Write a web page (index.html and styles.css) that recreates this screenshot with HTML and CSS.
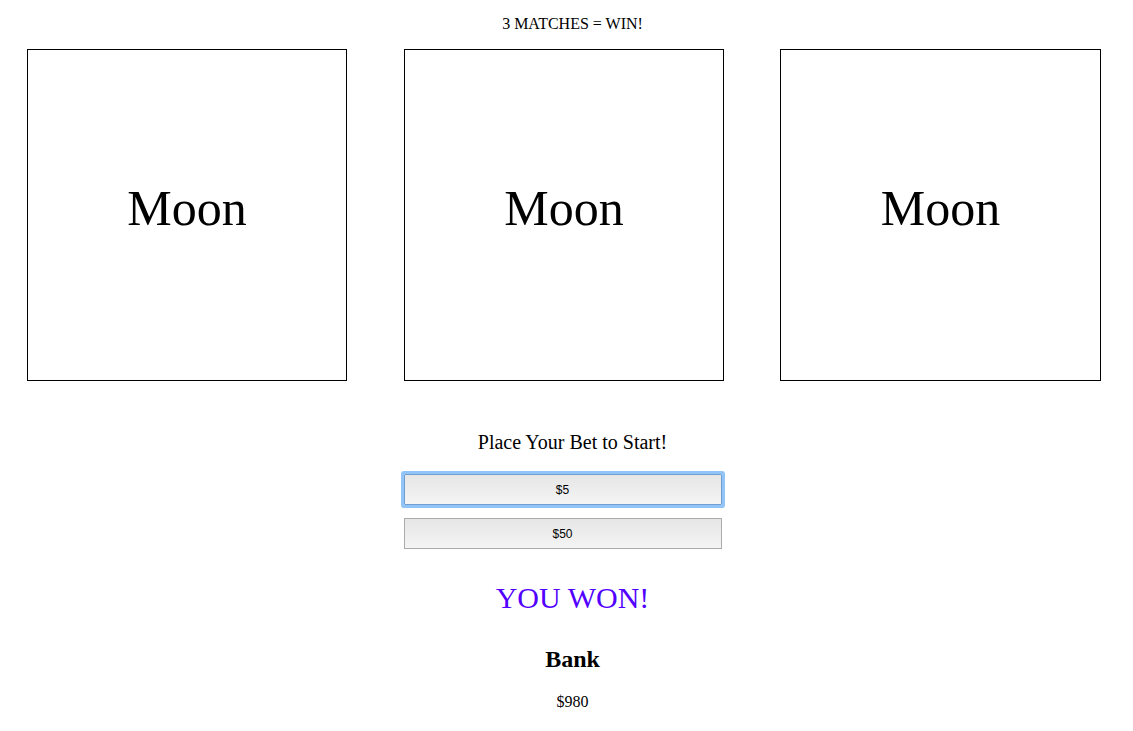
FILE: index.html
```html
<!DOCTYPE html>
<html>
<head>
<meta charset="utf-8">
<link rel="stylesheet" href="styles.css">
</head>
<body>
<p class="rule">3 MATCHES = WIN!</p>
<div class="reels">
  <div class="reel">Moon</div>
  <div class="reel">Moon</div>
  <div class="reel">Moon</div>
</div>
<div class="controls">
  <p class="prompt">Place Your Bet to Start!</p>
  <button class="bet focused">$5</button>
  <button class="bet">$50</button>
  <p class="result">YOU WON!</p>
  <h2 class="bank-title">Bank</h2>
  <p class="bank">$980</p>
</div>
</body>
</html>
```

FILE: styles.css
```css
html, body {
  margin: 0;
  padding: 0;
  background: #fff;
  color: #000;
  font-family: "Liberation Serif", "Times New Roman", serif;
}

.rule {
  margin: 15px 0 0;
  padding-left: 12px;
  font-size: 16px;
  line-height: 18px;
  text-align: center;
}

.reels {
  display: flex;
  gap: 57px;
  padding-left: 27px;
  margin-top: 16px;
}

.reel {
  box-sizing: border-box;
  width: 320px;
  height: 332px;
  padding-bottom: 14px;
  border: 1px solid #000;
  display: flex;
  align-items: center;
  justify-content: center;
  font-size: 50px;
  line-height: 58px;
}

.reel:last-child {
  margin-left: -1px;
  width: 321px;
}

.controls {
  display: flex;
  flex-direction: column;
  align-items: center;
  margin-left: 12px;
}

.prompt {
  margin: 49px 0 0;
  font-size: 20px;
  line-height: 24px;
  text-align: center;
}

.bet {
  box-sizing: border-box;
  width: 318px;
  height: 31px;
  margin: 0;
  padding: 0;
  border: 1px solid #ababab;
  border-radius: 0;
  background: linear-gradient(#e6e6e6, #f4f4f4);
  font-family: "Liberation Sans", Arial, sans-serif;
  font-size: 12px;
  color: #000;
  position: relative;
  left: -10px;
}

.bet.focused {
  margin-top: 20px;
  border-color: #6f9ed3;
  box-shadow: 0 0 0 3px #93c4f8;
  border-radius: 1px;
}

.bet + .bet {
  margin-top: 13px;
}

.result {
  margin: 31px 0 0;
  font-size: 30px;
  line-height: 36px;
  color: #5200ff;
}

.bank-title {
  margin: 29px 0 0;
  font-size: 24px;
  line-height: 28px;
  font-weight: bold;
}

.bank {
  margin: 20px 0 0;
  font-size: 16px;
  line-height: 18px;
}
```
